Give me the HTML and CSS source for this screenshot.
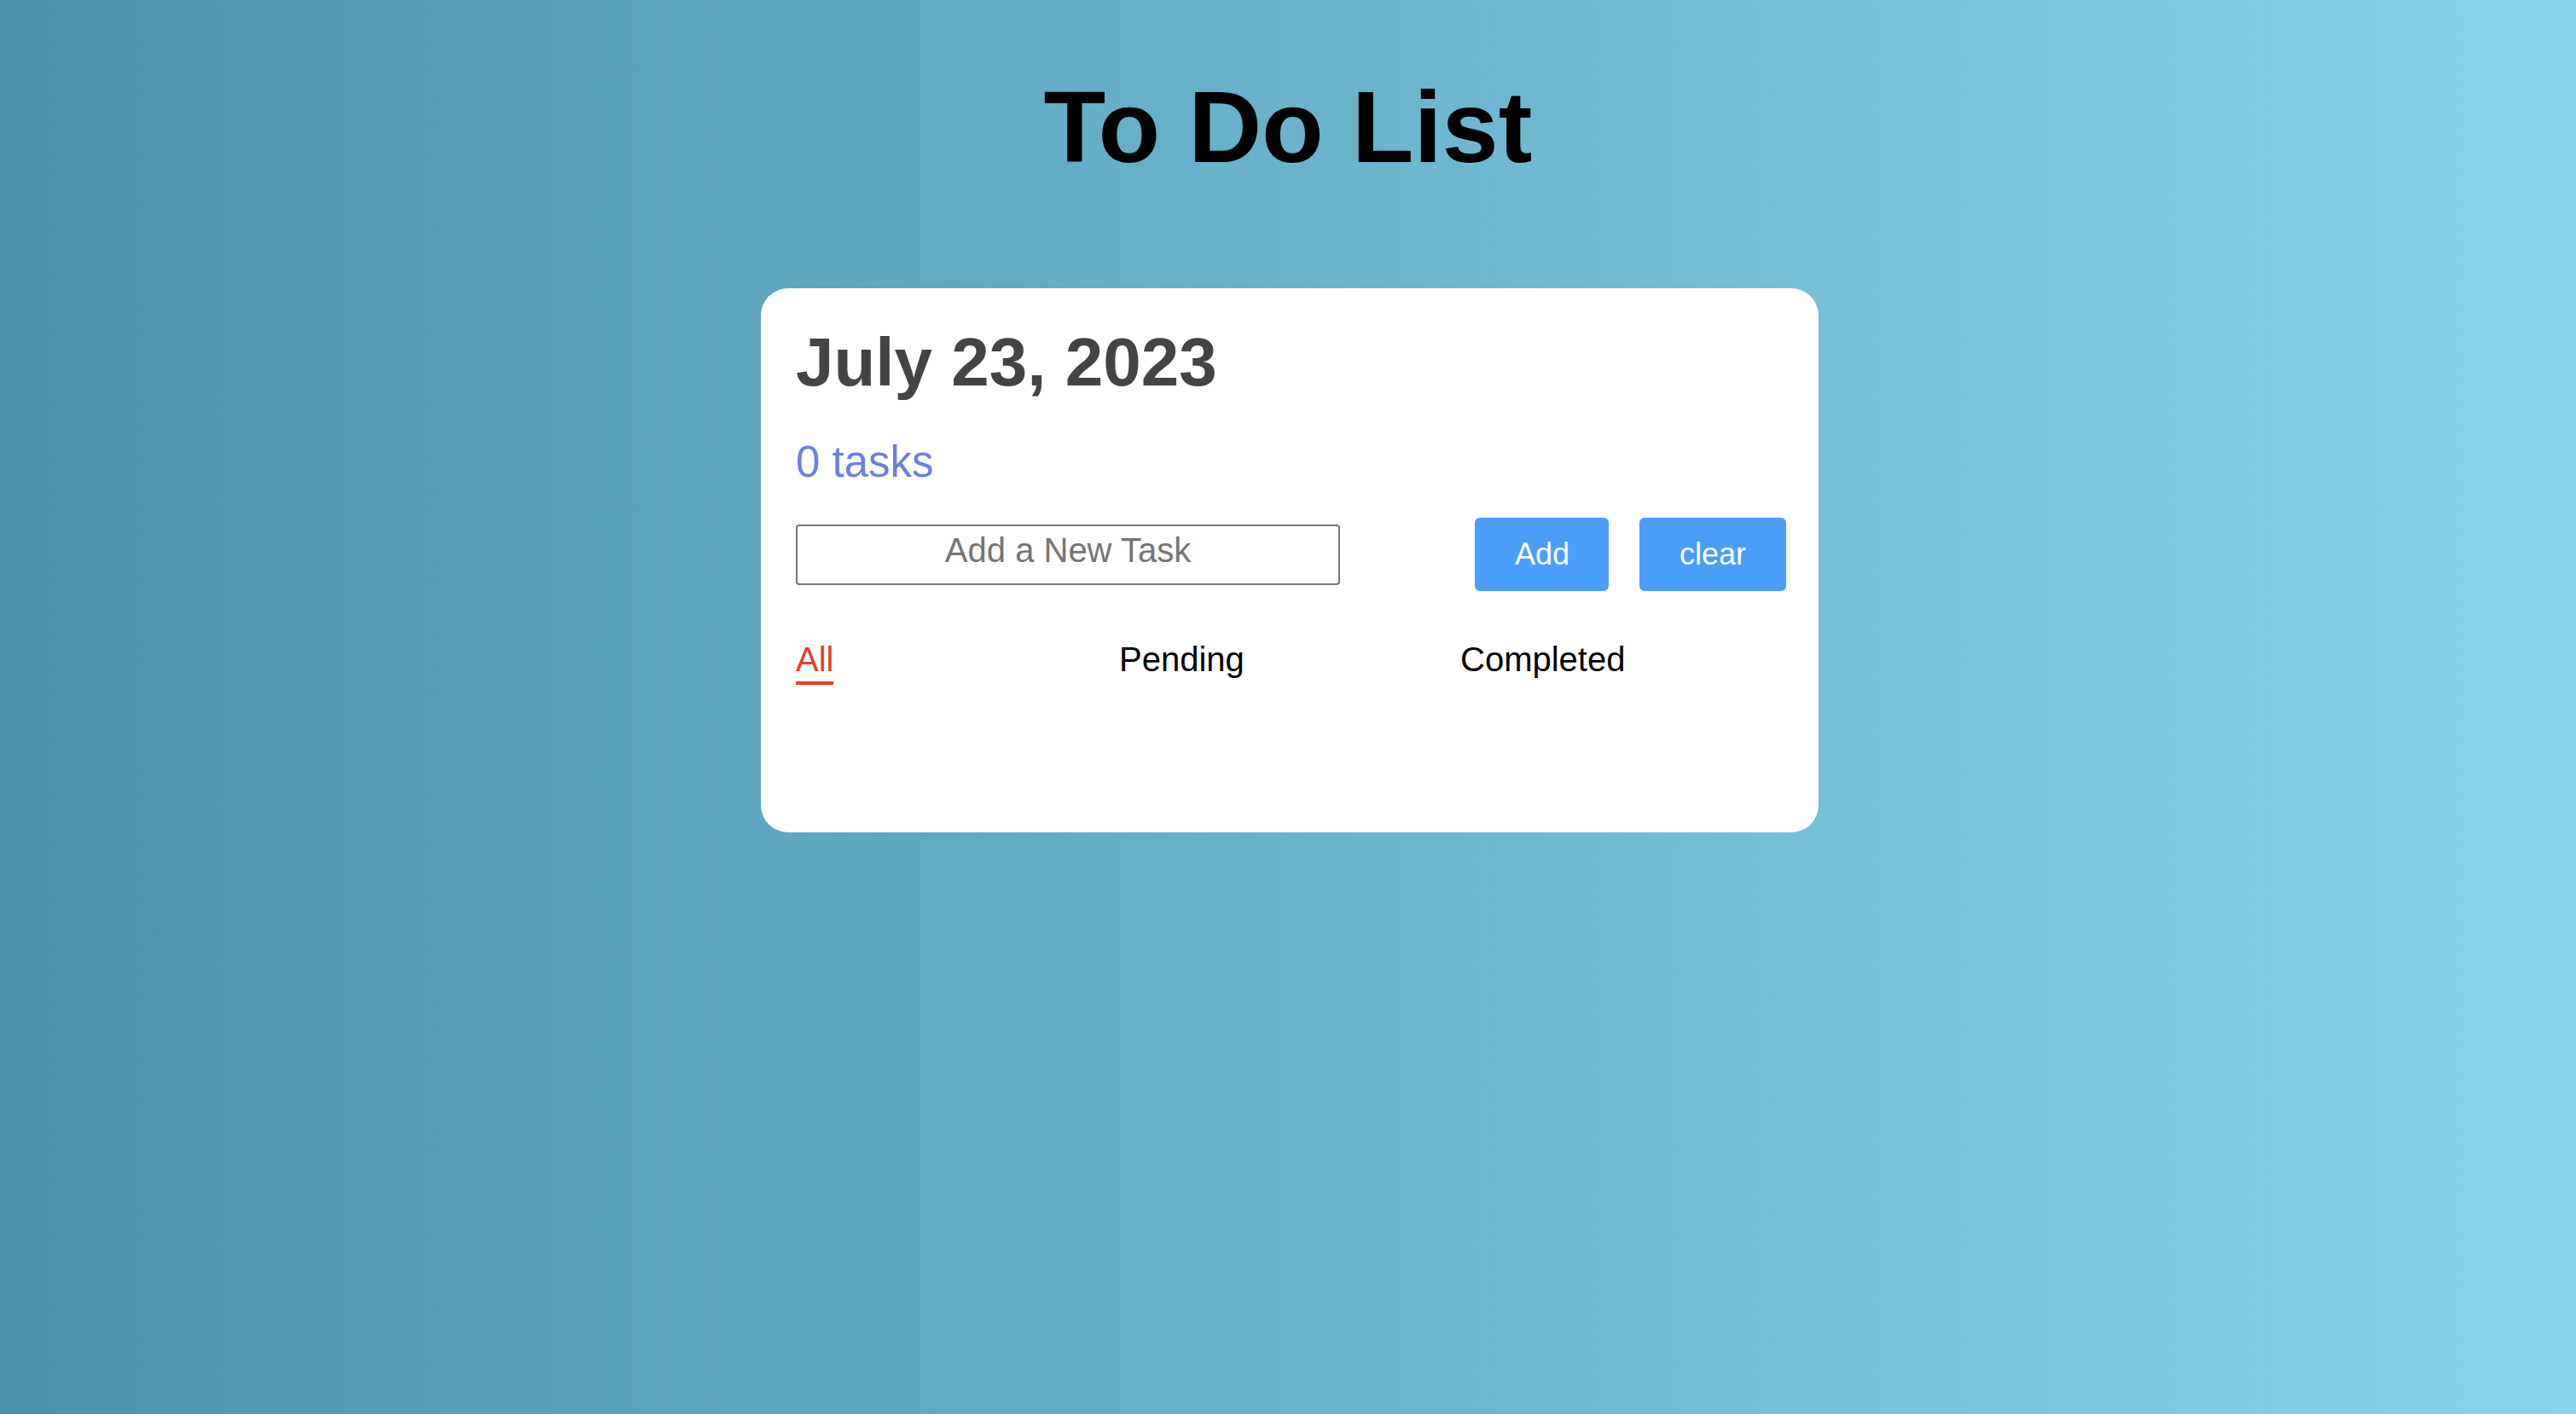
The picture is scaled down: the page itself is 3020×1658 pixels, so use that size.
FILE: index.html
```html
<!DOCTYPE html>
<html lang="en">
<head>
<meta charset="utf-8">
<title>To Do List</title>
<link rel="stylesheet" href="styles.css">
</head>
<body>
  <h1 class="page-title">To Do List</h1>
  <main class="card">
    <h2 class="date">July 23, 2023</h2>
    <p class="count">0 tasks</p>
    <div class="entry-row">
      <input class="task-input" type="text" placeholder="Add a New Task">
      <div class="actions">
        <button class="btn btn-add">Add</button>
        <button class="btn btn-clear">clear</button>
      </div>
    </div>
    <nav class="tabs">
      <div class="tab-cell"><span class="tab tab-active">All</span></div>
      <div class="tab-cell"><span class="tab">Pending</span></div>
      <div class="tab-cell"><span class="tab">Completed</span></div>
    </nav>
    <ul class="task-list"></ul>
  </main>
</body>
</html>
```
FILE: styles.css
```css
html, body {
  margin: 0;
  padding: 0;
}
body {
  min-height: 100vh;
  background: linear-gradient(to right, #4a92ae 0%, #88d3ea 100%);
  font-family: "Liberation Sans", Arial, Helvetica, sans-serif;
  overflow: hidden;
}
.page-title {
  margin: 90px 0 0 0;
  text-align: center;
  font-size: 119px;
  line-height: 118px;
  font-weight: 700;
  color: #000;
}
.card {
  width: 1240px;
  box-sizing: border-box;
  margin: 130px 0 0 calc(50% - 618px);
  background: #fff;
  border-radius: 32px;
  padding: 47px 38px 173px 41px;
}
.date {
  margin: 0;
  font-size: 80px;
  line-height: 80px;
  font-weight: 700;
  color: #444444;
}
.count {
  margin: 52px 0 0 0;
  font-size: 51px;
  line-height: 50px;
  color: #6b7fdf;
}
.entry-row {
  margin-top: 40px;
  display: flex;
  align-items: center;
  justify-content: space-between;
}
.task-input {
  width: 638px;
  height: 71px;
  box-sizing: border-box;
  border: 2px solid #767676;
  border-radius: 4px;
  padding: 0 10px 10px 10px;
  font-family: "Liberation Sans", Arial, Helvetica, sans-serif;
  font-size: 40px;
  text-align: center;
  color: #222;
  background: #fff;
  outline: none;
}
.task-input::placeholder {
  color: #757575;
}
.actions {
  display: flex;
  gap: 36px;
}
.btn {
  height: 86px;
  box-sizing: border-box;
  border: none;
  border-radius: 6px;
  background: #4a9efa;
  color: #fff;
  font-family: "Liberation Sans", Arial, Helvetica, sans-serif;
  font-size: 36px;
  line-height: 36px;
  padding: 0 47px;
  cursor: pointer;
}
.btn-add {
  padding: 0 46px 0 47px;
}
.tabs {
  margin-top: 60px;
  display: grid;
  grid-template-columns: 379px 400px auto;
}
.tab {
  display: inline-block;
  font-size: 40px;
  line-height: 40px;
  color: #000;
  padding-bottom: 6px;
  border-bottom: 4px solid transparent;
}
.tab-active {
  color: #ea3b2c;
  border-bottom-color: #ea3b2c;
}
.task-list {
  margin: 0;
  padding: 0;
  list-style: none;
}
```
